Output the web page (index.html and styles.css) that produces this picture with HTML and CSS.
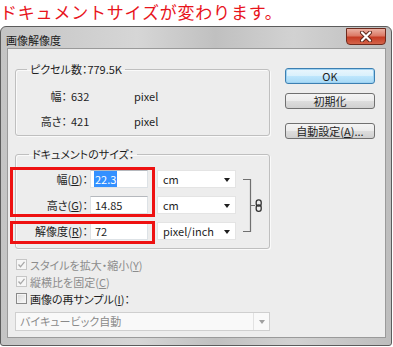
FILE: index.html
```html
<!DOCTYPE html>
<html lang="ja">
<head>
    <meta charset="UTF-8">
    <meta name="viewport" content="width=device-width, initial-scale=1.0">
    <title>画像解像度</title>
    <link rel="stylesheet" href="styles.css">
</head>
<body>

    <div class="caption">ドキュメントサイズが変わります。</div>

    <div class="window">
        <!-- Title bar -->
        <div class="titlebar">
            <span class="title">画像解像度</span>
            <span class="close">
                <svg width="14" height="11" viewBox="0 0 14 11">
                    <path d="M3 1.5 L11 9.5 M11 1.5 L3 9.5" stroke="#5a2418" stroke-width="4" stroke-linecap="round"/>
                    <path d="M3 1.5 L11 9.5 M11 1.5 L3 9.5" stroke="#ffffff" stroke-width="2.2" stroke-linecap="round"/>
                </svg>
            </span>
        </div>

        <div class="client">
            <div class="left">
                <!-- Pixel dimensions -->
                <fieldset class="group pixels">
                    <legend>ピクセル数：779.5K</legend>
                    <div class="pixel-grid">
                        <span class="lbl">幅：</span><span>632</span><span>pixel</span>
                        <span class="lbl">高さ：</span><span>421</span><span>pixel</span>
                    </div>
                </fieldset>

                <!-- Document size -->
                <fieldset class="group doc">
                    <legend>ドキュメントのサイズ：</legend>
                    <div class="doc-grid">
                        <span class="lbl">幅(<u>D</u>)：</span>
                        <span class="field"><span class="selected">22.3</span></span>
                        <span class="combo-box">cm<span class="tri"></span></span>
                        <span class="link">
                            <svg width="30" height="70" viewBox="0 0 30 70">
                                <path d="M7 9.5 H14.5 V61.5 H7 M14.5 35.5 H19" fill="none" stroke="#707070" stroke-width="1.2"/>
                                <rect x="20.2" y="29.8" width="5" height="6.4" rx="2.4" fill="none" stroke="#333" stroke-width="1.3"/>
                                <rect x="20.2" y="35" width="5" height="6.4" rx="2.4" fill="none" stroke="#333" stroke-width="1.3"/>
                            </svg>
                        </span>

                        <span class="lbl">高さ(<u>G</u>)：</span>
                        <span class="field">14.85</span>
                        <span class="combo-box">cm<span class="tri"></span></span>

                        <span class="lbl">解像度(<u>R</u>)：</span>
                        <span class="field">72</span>
                        <span class="combo-box">pixel/inch<span class="tri"></span></span>

                        <!-- highlight frames -->
                        <span class="mark mark-size"></span>
                        <span class="mark mark-res"></span>
                    </div>
                </fieldset>

                <div class="check disabled"><span class="box"><svg width="9" height="9" viewBox="0 0 9 9"><path d="M1.5 4.5 L3.5 6.8 L7.5 1.8" fill="none" stroke="#a8a8a8" stroke-width="1.3"/></svg></span>スタイルを拡大・縮小(<u>Y</u>)</div>
                <div class="check disabled"><span class="box"><svg width="9" height="9" viewBox="0 0 9 9"><path d="M1.5 4.5 L3.5 6.8 L7.5 1.8" fill="none" stroke="#a8a8a8" stroke-width="1.3"/></svg></span>縦横比を固定(<u>C</u>)</div>
                <div class="check"><span class="box empty"></span>画像の再サンプル(<u>I</u>)：</div>

                <div class="dropdown">
                    <span>バイキュービック自動</span>
                    <span class="drop-arrow"><span class="tri"></span></span>
                </div>
            </div>

            <!-- Buttons -->
            <div class="buttons">
                <button class="btn default">OK</button>
                <button class="btn reset">初期化</button>
                <button class="btn auto">自動設定(<u>A</u>)...</button>
            </div>
        </div>
    </div>

</body>
</html>
```

FILE: styles.css
```css
body {
    margin: 0;
    background: #ffffff;
    font-family: "Noto Sans CJK JP", "Noto Sans", sans-serif;
    font-feature-settings: "palt";
}

.caption {
    height: 26px;
    line-height: 23px;
    font-size: 17px;
    color: #e8141c;
    font-feature-settings: normal;
    letter-spacing: 0.8px;
    white-space: nowrap;
}

.window {
    width: 392px;
    height: 320px;
    box-sizing: border-box;
    border: 1px solid #5c5c5c;
    border-radius: 6px 6px 3px 3px;
    background: linear-gradient(to right, #c4c4c4, #d6d6d6 35%, #c0c0c0 55%, #d2d2d2 75%, #bdbdbd);
    display: flex;
    flex-direction: column;
}

.titlebar {
    height: 21px;
    display: flex;
    justify-content: space-between;
    align-items: flex-start;
}

.title {
    font-size: 11px;
    line-height: 14px;
    color: #1a1a1a;
    margin: 6px 0 0 5px;
    font-feature-settings: normal;
}

.close {
    width: 40px;
    height: 17px;
    box-sizing: border-box;
    margin: 1px 5px 0 0;
    border: 1px solid #6e2a1d;
    border-radius: 0 0 4px 4px;
    background: linear-gradient(#eab0a2, #dc7a66 45%, #c53c24 55%, #d4644a);
    display: flex;
    align-items: center;
    justify-content: center;
}

.client {
    flex: 1;
    margin: 0 5px 7px 6px;
    border: 1px solid #9a9a9a;
    background: #ededed;
    padding: 13px 0 0 7px;
    display: grid;
    grid-template-columns: 255px 90px;
    column-gap: 15px;
    align-items: start;
    font-size: 11px;
    color: #1e1e1e;
}

.group {
    margin: 0;
    padding: 0;
    border: 1px solid #bfbfbf;
    border-radius: 3px;
    box-shadow: 1px 1px 0 #fafafa, inset 1px 1px 0 #fafafa;
}

.group legend {
    padding: 0 3px;
    line-height: 14px;
    font-size: 11px;
}

.pixels legend {
    margin-left: 11px;
}

.doc {
    margin-top: 11px;
}

.doc legend {
    margin-left: 13px;
}

.pixel-grid {
    display: grid;
    grid-template-columns: 51px 67px 1fr;
    grid-auto-rows: 16px;
    row-gap: 9px;
    padding: 12px 0 6px 0;
    line-height: 16px;
}

.pixel-grid span:nth-child(3n+2) {
    padding-left: 4px;
}

.lbl {
    text-align: right;
}

.doc-grid {
    position: relative;
    display: grid;
    grid-template-columns: 72px 60px 88px 1fr;
    grid-auto-rows: 18px;
    row-gap: 8px;
    padding: 0;
    margin: 9px 0 8px 0;
    line-height: 18px;
}

.field {
    margin-left: 2px;
    width: 58px;
    height: 18px;
    box-sizing: border-box;
    background: #ffffff;
    border: 1px solid #dde2e6;
    border-top-color: #b5b8bd;
    padding-left: 4px;
    line-height: 16px;
}

.selected {
    background: #3390ff;
    color: #ffffff;
    margin-left: -1px;
    padding: 0 1px;
}

.combo-box {
    margin-left: 9px;
    width: 79px;
    height: 18px;
    box-sizing: border-box;
    background: #ffffff;
    border: 1px solid #e4e4e4;
    padding-left: 5px;
    line-height: 16px;
    position: relative;
}

.tri {
    position: absolute;
    right: 5px;
    top: 7px;
    border-left: 3.5px solid transparent;
    border-right: 3.5px solid transparent;
    border-top: 4px solid #1e1e1e;
}

.link {
    grid-column: 4;
    grid-row: 1 / 4;
}

.link svg {
    display: block;
}

.mark {
    position: absolute;
    left: -6px;
    width: 145px;
    box-sizing: border-box;
    border: 3px solid #ee1111;
}

.mark-size {
    top: -3px;
    height: 50px;
}

.mark-res {
    top: 51px;
    height: 23px;
}

.check {
    display: flex;
    align-items: center;
    height: 17px;
    margin-left: 1px;
}

.left .doc + .check {
    margin-top: 7px;
}

.check.disabled {
    color: #8c8c8c;
}

.box {
    width: 11px;
    height: 11px;
    box-sizing: border-box;
    border: 1px solid #c6c6c6;
    background: #f6f6f6;
    margin-right: 3px;
    display: flex;
    align-items: center;
    justify-content: center;
}

.box.empty {
    border-color: #8a8a8a;
    background: linear-gradient(135deg, #d8d8d8, #fbfbfb);
    box-shadow: inset 0 0 0 1px #f4f4f4;
}

.dropdown {
    margin-top: 5px;
    height: 19px;
    box-sizing: border-box;
    border: 1px solid #cfcfcf;
    background: #f9f9f9;
    color: #8a8a8a;
    display: flex;
    justify-content: space-between;
    line-height: 17px;
    padding-left: 4px;
}

.drop-arrow {
    width: 15px;
    border-left: 1px solid #e2e2e2;
    position: relative;
}

.drop-arrow .tri {
    right: 4px;
    top: 7px;
    border-top-color: #a0a0a0;
}

.buttons {
    margin-top: 6px;
    display: flex;
    flex-direction: column;
}

.btn {
    height: 16px;
    padding: 0;
    font-family: inherit;
    font-size: 11px;
    line-height: 14px;
    color: #1e1e1e;
    border: 1px solid #707070;
    border-radius: 3px;
    background: linear-gradient(#f4f4f4, #ebebeb 50%, #dddddd 51%, #d0d0d0);
}

.btn.default {
    border-color: #3c7fb1;
    background: linear-gradient(#eaf6fd, #d9f0fc 50%, #bee6fd 51%, #a7d9f5);
    box-shadow: inset 0 0 0 1px #9ed2f2;
}

.btn.reset {
    margin-top: 9px;
}

.btn.auto {
    margin-top: 14px;
}
```
